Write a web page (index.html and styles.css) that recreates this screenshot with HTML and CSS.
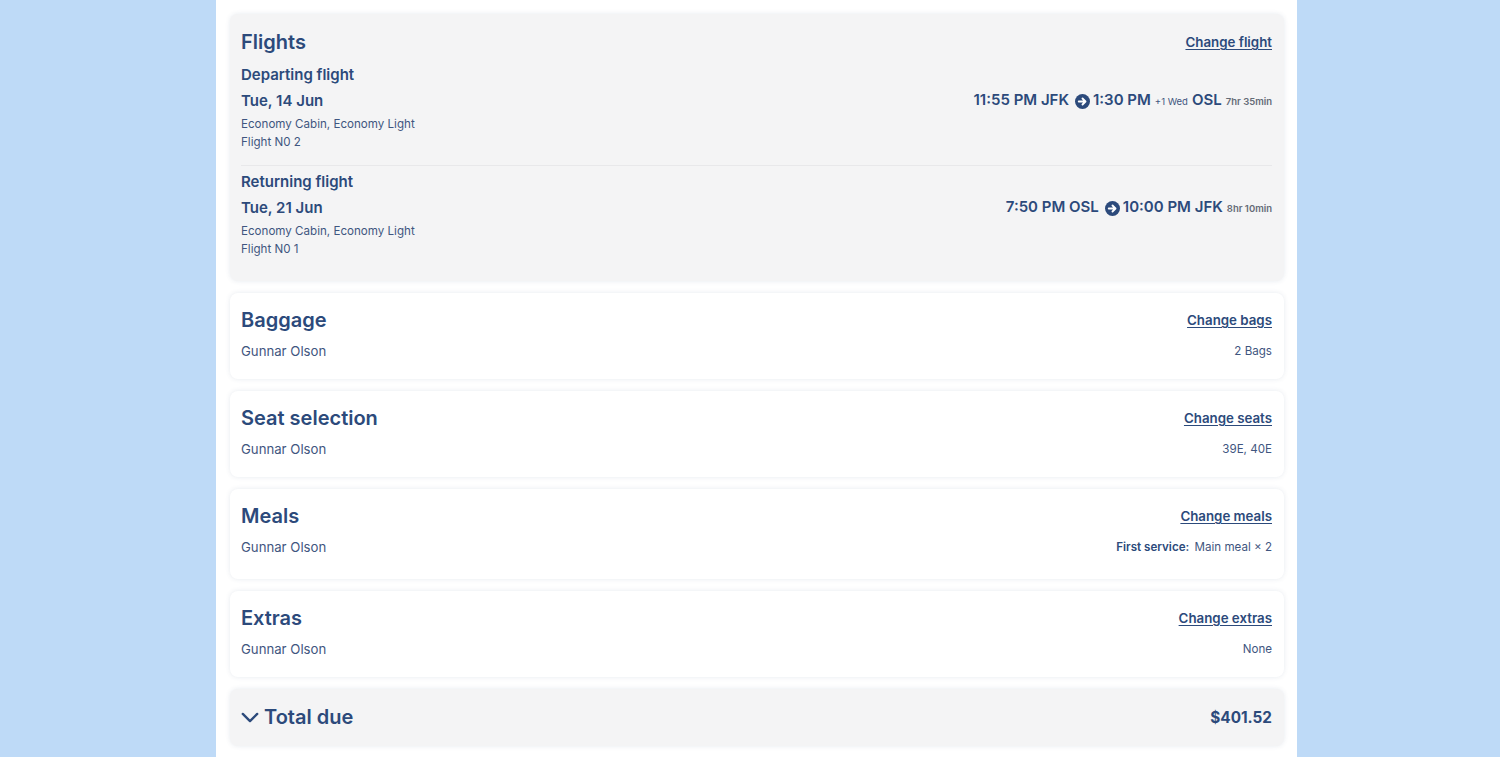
FILE: index.html
```html
<!DOCTYPE html>
<html>
<head>
<meta charset="utf-8">
<link rel="stylesheet" href="styles.css">
</head>
<body>
<main class="page">
  <section class="card card-gray card-flights">
    <div class="card-head">
      <h2 class="title">Flights</h2>
      <a class="change" href="#">Change flight</a>
    </div>
    <div class="leg">
      <div class="leg-label">Departing flight</div>
      <div class="leg-row">
        <div class="leg-date">Tue, 14 Jun</div>
        <div class="leg-times">
          <span class="t">11:55 PM JFK</span>
          <svg class="arrow" viewBox="0 0 16 16" width="15" height="15"><circle cx="8" cy="8" r="8" fill="#2c4a7b"/><path d="M4 8h7M8 4.8L11.2 8 8 11.2" fill="none" stroke="#fff" stroke-width="2" stroke-linecap="round" stroke-linejoin="round"/></svg>
          <span class="t">1:30 PM</span>
          <span class="plus">+1 Wed</span>
          <span class="t">OSL</span>
          <span class="dur">7hr 35min</span>
        </div>
      </div>
      <div class="leg-meta">Economy Cabin, Economy Light</div>
      <div class="leg-meta">Flight N0 2</div>
    </div>
    <div class="leg leg-sep">
      <div class="leg-label">Returning flight</div>
      <div class="leg-row">
        <div class="leg-date">Tue, 21 Jun</div>
        <div class="leg-times">
          <span class="t">7:50 PM OSL</span>
          <svg class="arrow" viewBox="0 0 16 16" width="15" height="15"><circle cx="8" cy="8" r="8" fill="#2c4a7b"/><path d="M4 8h7M8 4.8L11.2 8 8 11.2" fill="none" stroke="#fff" stroke-width="2" stroke-linecap="round" stroke-linejoin="round"/></svg>
          <span class="t">10:00 PM JFK</span>
          <span class="dur">8hr 10min</span>
        </div>
      </div>
      <div class="leg-meta">Economy Cabin, Economy Light</div>
      <div class="leg-meta">Flight N0 1</div>
    </div>
  </section>

  <section class="card">
    <div class="card-head">
      <h2 class="title">Baggage</h2>
      <a class="change" href="#">Change bags</a>
    </div>
    <div class="row">
      <span class="name">Gunnar Olson</span>
      <span class="val">2 Bags</span>
    </div>
  </section>

  <section class="card">
    <div class="card-head">
      <h2 class="title">Seat selection</h2>
      <a class="change" href="#">Change seats</a>
    </div>
    <div class="row">
      <span class="name">Gunnar Olson</span>
      <span class="val">39E, 40E</span>
    </div>
  </section>

  <section class="card card-meals">
    <div class="card-head">
      <h2 class="title">Meals</h2>
      <a class="change" href="#">Change meals</a>
    </div>
    <div class="row">
      <span class="name">Gunnar Olson</span>
      <span class="val"><b class="svc">First service:</b> Main meal × 2</span>
    </div>
  </section>

  <section class="card">
    <div class="card-head">
      <h2 class="title">Extras</h2>
      <a class="change" href="#">Change extras</a>
    </div>
    <div class="row">
      <span class="name">Gunnar Olson</span>
      <span class="val">None</span>
    </div>
  </section>

  <section class="card card-gray total">
    <div class="total-left">
      <svg class="chev" viewBox="0 0 20 12" width="18" height="11"><path d="M2 2l8 8 8-8" fill="none" stroke="#2c4a7b" stroke-width="2.6" stroke-linecap="round" stroke-linejoin="round"/></svg>
      <span class="total-title">Total due</span>
    </div>
    <span class="amount">$401.52</span>
  </section>
</main>
</body>
</html>
```

FILE: styles.css
```css
* { box-sizing: border-box; }
html, body { margin: 0; padding: 0; }
body {
  background: #bedaf7;
  font-family: Inter, "Noto Sans", "Liberation Sans", sans-serif;
  color: #2c4a7b;
  height: 757px;
  overflow: hidden;
}
.page {
  margin-left: 216px;
  width: 1081px;
  min-height: 757px;
  background: #ffffff;
  padding: 14px 13px 12px 14px;
  display: flex;
  flex-direction: column;
  gap: 12px;
}
.card {
  background: #ffffff;
  border-radius: 8px;
  box-shadow: 0 0 5px rgba(60, 80, 120, 0.12);
  padding: 13px 12px 19px 11px;
}
.card-gray { background: #f4f4f5; }
.card-flights { padding-top: 14px; padding-bottom: 23px; }
.card-head {
  display: flex;
  justify-content: space-between;
  align-items: center;
}
.title {
  margin: 0;
  font-size: 20px;
  line-height: 28px;
  font-weight: 600;
}
.change {
  color: #2c4a7b;
  font-size: 13.3px;
  font-weight: 600;
  text-decoration: underline;
  text-underline-offset: 2px;
}
.leg {
  padding-top: 9px;
}
.leg-sep {
  border-top: 1px solid #e8e8ea;
  margin-top: 14px;
  padding-top: 6px;
}
.leg-label {
  font-size: 15px;
  font-weight: 600;
  line-height: 20px;
}
.leg-row {
  display: flex;
  justify-content: space-between;
  align-items: center;
  margin-top: 4px;
  margin-bottom: 3px;
  line-height: 22px;
}
.leg-date {
  font-size: 15px;
  font-weight: 600;
}
.leg-meta {
  font-size: 11.6px;
  line-height: 17.5px;
  color: #3f5680;
}
.leg-times {
  display: flex;
  align-items: baseline;
  gap: 4px;
}
.leg-times .t {
  font-size: 15px;
  font-weight: 600;
}
.leg-times .arrow {
  align-self: center;
  margin-left: 2px;
  margin-right: -1px;
}
.plus {
  font-size: 9.5px;
  color: #3f5680;
}
.dur {
  font-size: 9.5px;
  font-weight: 600;
  color: #646b77;
}
.row {
  display: flex;
  justify-content: space-between;
  align-items: center;
  margin-top: 8px;
  line-height: 18px;
}
.name {
  font-size: 13.2px;
  color: #3f5680;
}
.val {
  font-size: 11.6px;
  color: #3f5680;
}
.svc {
  font-weight: 600;
  color: #2c4a7b;
  margin-right: 2px;
}
.card-meals { padding-bottom: 23px; }
.total {
  display: flex;
  justify-content: space-between;
  align-items: center;
  padding: 14px 12px 15px 11px;
}
.total-left {
  display: flex;
  align-items: center;
  gap: 5px;
}
.total-title {
  font-size: 20px;
  font-weight: 600;
  line-height: 28px;
}
.amount {
  font-size: 15.3px;
  font-weight: 700;
}
```
